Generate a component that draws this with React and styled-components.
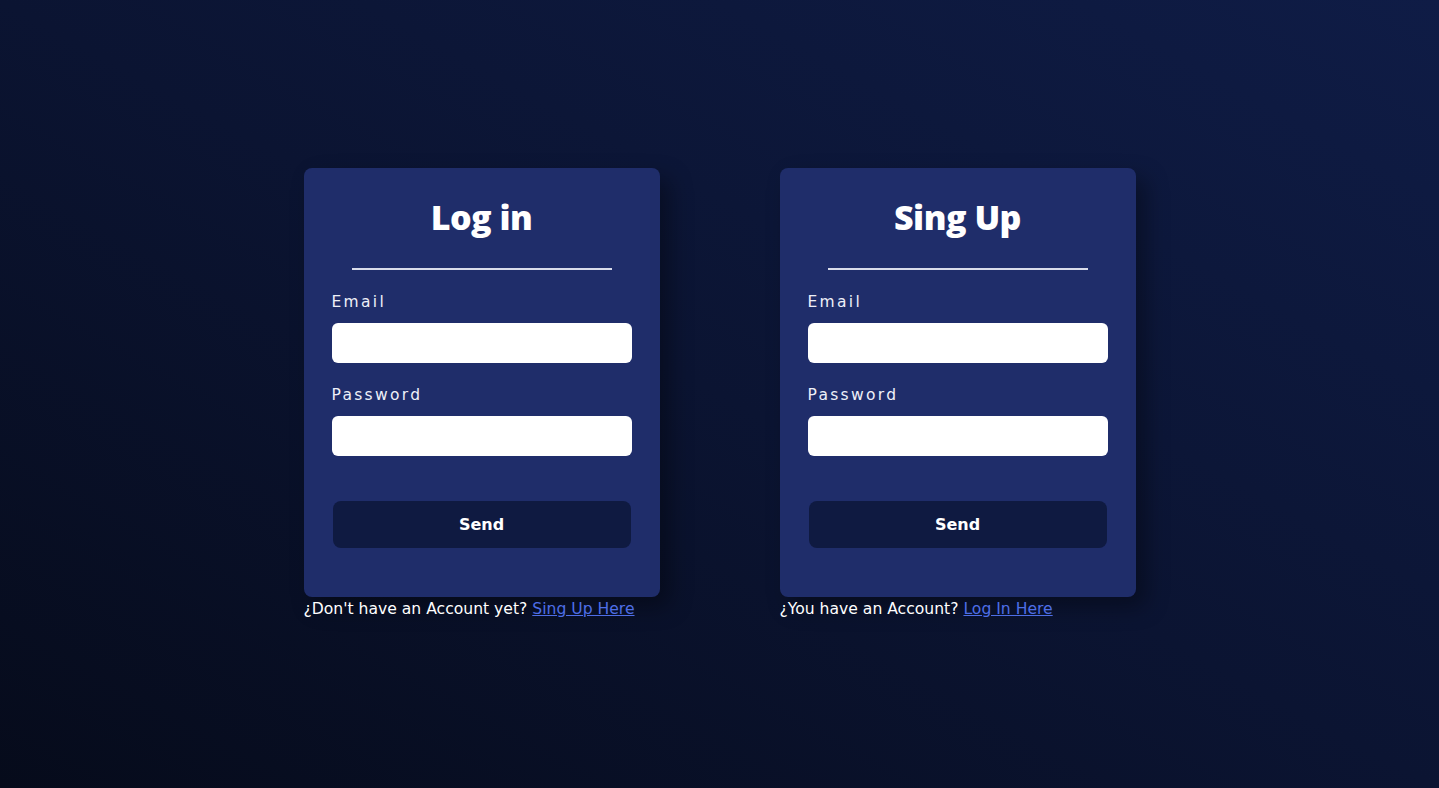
import React from 'react'
import styled, { createGlobalStyle } from 'styled-components'

const GlobalStyle = createGlobalStyle`
  * {
    box-sizing: border-box;
  }
  html, body {
    margin: 0;
    padding: 0;
  }
  body {
    font-family: 'DejaVu Sans', 'Open Sans', sans-serif;
    color: #ffffff;
  }
`

const Page = styled.div`
  width: 100vw;
  height: 100vh;
  display: flex;
  align-items: center;
  justify-content: center;
  gap: 120px;
  background: linear-gradient(to top right, #060b1b 0%, #0b1432 50%, #0f1c46 100%);
`

const Column = styled.div`
  display: flex;
  flex-direction: column;
  width: 356px;
`

const Card = styled.form`
  display: flex;
  flex-direction: column;
  height: 429px;
  padding: 26px 28px 0;
  background: #1f2d6a;
  border-radius: 8px;
  box-shadow: 10px 10px 22px rgba(0, 0, 0, 0.35);
`

const Title = styled.h1`
  margin: 0;
  font-family: 'Open Sans', sans-serif;
  font-size: 34px;
  line-height: 46px;
  font-weight: 800;
  text-align: center;
  letter-spacing: -0.5px;
`

const Divider = styled.hr`
  width: 260px;
  margin: 28px auto 22px;
  border: none;
  border-top: 2px solid #d9dcea;
`

const Label = styled.label`
  display: block;
  font-size: 15.5px;
  line-height: 20px;
  letter-spacing: 2.3px;
  font-weight: 400;
  color: #eef0f8;
  margin-bottom: 11px;
`

const Input = styled.input`
  width: 100%;
  height: 40px;
  border: none;
  border-radius: 6px;
  background: #ffffff;
  padding: 0 12px;
  font-size: 15px;
  outline: none;
  margin-bottom: 22px;
`

const Button = styled.button`
  margin: 23px 1px 0;
  height: 47px;
  border: none;
  border-radius: 8px;
  background: #0f1a41;
  color: #ffffff;
  font-family: inherit;
  font-size: 16px;
  font-weight: 700;
  cursor: pointer;
`

const Footer = styled.p`
  margin: 1px 0 0;
  font-size: 15.6px;
  line-height: 22px;
  color: #ffffff;
`

const FooterLink = styled.a`
  color: #4e6ee6;
  text-decoration: underline;
`

const AuthCard = ({ title, question, linkText }) => (
  <Column>
    <Card onSubmit={(e) => e.preventDefault()}>
      <Title>{title}</Title>
      <Divider />
      <Label>Email</Label>
      <Input type='email' />
      <Label>Password</Label>
      <Input type='password' />
      <Button type='submit'>Send</Button>
    </Card>
    <Footer>
      {question} <FooterLink href='#'>{linkText}</FooterLink>
    </Footer>
  </Column>
)

const App = () => (
  <>
    <GlobalStyle />
    <Page>
      <AuthCard
        title='Log in'
        question="¿Don't have an Account yet?"
        linkText='Sing Up Here'
      />
      <AuthCard
        title='Sing Up'
        question='¿You have an Account?'
        linkText='Log In Here'
      />
    </Page>
  </>
)

export default App
